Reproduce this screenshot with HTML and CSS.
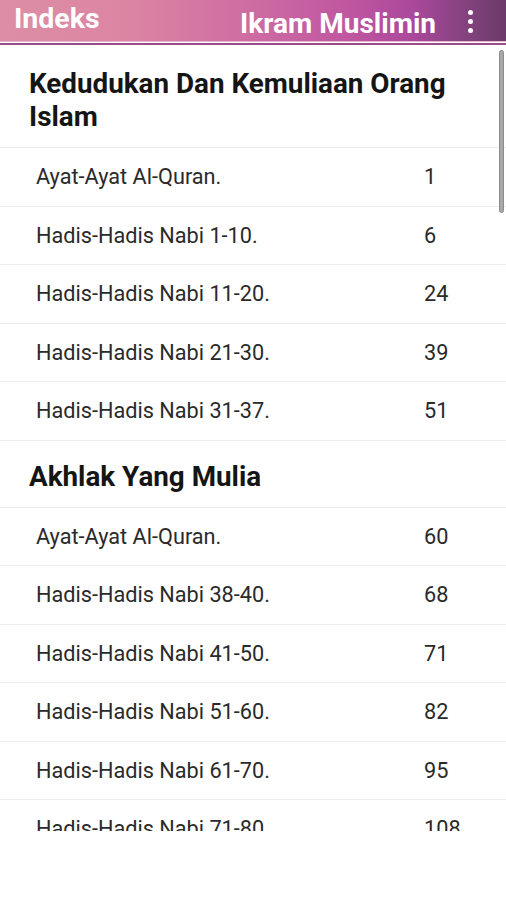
FILE: index.html
```html
<!DOCTYPE html>
<html>
<head>
<meta charset="utf-8">
<link rel="stylesheet" href="styles.css">
</head>
<body>
<div class="app">
  <header class="bar">
    <span class="bar-title">Indeks</span>
    <span class="bar-app">Ikram Muslimin</span>
    <span class="menu"><i></i><i></i><i></i></span>
  </header>
  <div class="rule"></div>
  <main class="list">
    <section class="group">
      <h2 class="group-title">Kedudukan Dan Kemuliaan Orang Islam</h2>
      <div class="row"><span class="label">Ayat-Ayat Al-Quran.</span><span class="page">1</span></div>
      <div class="row"><span class="label">Hadis-Hadis Nabi 1-10.</span><span class="page">6</span></div>
      <div class="row"><span class="label">Hadis-Hadis Nabi 11-20.</span><span class="page">24</span></div>
      <div class="row"><span class="label">Hadis-Hadis Nabi 21-30.</span><span class="page">39</span></div>
      <div class="row"><span class="label">Hadis-Hadis Nabi 31-37.</span><span class="page">51</span></div>
    </section>
    <section class="group">
      <h2 class="group-title">Akhlak Yang Mulia</h2>
      <div class="row"><span class="label">Ayat-Ayat Al-Quran.</span><span class="page">60</span></div>
      <div class="row"><span class="label">Hadis-Hadis Nabi 38-40.</span><span class="page">68</span></div>
      <div class="row"><span class="label">Hadis-Hadis Nabi 41-50.</span><span class="page">71</span></div>
      <div class="row"><span class="label">Hadis-Hadis Nabi 51-60.</span><span class="page">82</span></div>
      <div class="row"><span class="label">Hadis-Hadis Nabi 61-70.</span><span class="page">95</span></div>
      <div class="row"><span class="label">Hadis-Hadis Nabi 71-80.</span><span class="page">108</span></div>
    </section>
    <div class="scrollbar"></div>
  </main>
</div>
</body>
</html>
```
FILE: styles.css
```css
* { box-sizing: border-box; }
html, body { margin: 0; padding: 0; background: #fff; }
body { font-family: Roboto, "Noto Sans", sans-serif; width: 506px; height: 900px; overflow: hidden; }

.app { display: flex; flex-direction: column; }

.bar {
  height: 41px;
  display: flex;
  align-items: flex-start;
  padding: 0 0 0 14px;
  color: #fff;
  background: linear-gradient(90deg, #dd8ea6 0%, #dc85a3 25%, #cd6ca2 50%, #bf55a0 70%, #a9489a 82%, #84427f 92%, #6b3b69 100%);
}
.bar-title { font-size: 28.5px; line-height: 32px; font-weight: 700; margin-top: 3px; }
.bar-app { font-size: 28px; line-height: 32px; font-weight: 700; margin-left: auto; margin-top: 8px; }
.menu { width: 16px; margin: 10px 28px 0 26px; display: flex; flex-direction: column; align-items: center; gap: 4px; }
.menu i { width: 5px; height: 5px; border-radius: 50%; background: #fff; display: block; }

.rule {
  height: 4px;
  border-top: 1px solid #e9b6cf;
  border-bottom: 2px solid #9a4b8a;
  background: #fff;
}

.list { position: relative; height: 786px; overflow: hidden; }

.group-title {
  margin: 0;
  padding: 19px 20px 14px 29px;
  font-size: 27.8px;
  line-height: 33px;
  font-weight: 700;
  color: #151515;
  border-bottom: 1px solid #ececec;
}
.group:first-child .group-title { padding-top: 22px; }

.row {
  height: 58.5px;
  display: flex;
  align-items: center;
  padding-left: 36px;
  font-size: 21.7px;
  color: #2a2a2a;
  border-bottom: 1px solid #ececec;
}
.label { flex: 0 0 388px; }

.scrollbar {
  position: absolute;
  right: 2px;
  top: 5px;
  width: 5px;
  height: 163px;
  border-radius: 3px;
  background: #a8a8a8;
  border: 1px solid #8c8c8c;
}
```
